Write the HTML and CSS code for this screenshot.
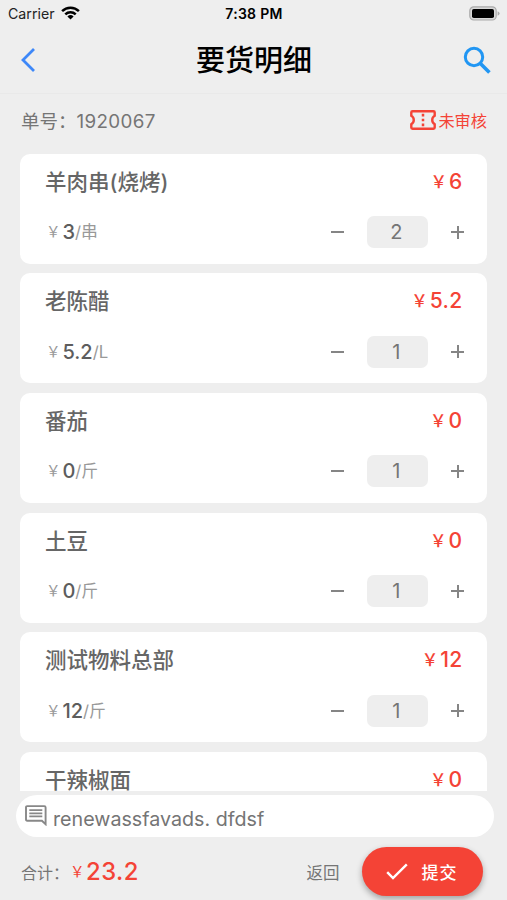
FILE: index.html
```html
<!DOCTYPE html>
<html lang="zh-CN">
<head>
<meta charset="utf-8">
<title>要货明细</title>
<link rel="stylesheet" href="styles.css">
</head>
<body>
<div class="screen">
  <header class="header">
    <div class="status">
      <div class="carrier"><span>Carrier</span>
        <svg class="wifi" width="19" height="14" viewBox="0 0 19 14"><g fill="none" stroke="#000" stroke-width="2.5"><path d="M1.1 5.1a12 12 0 0 1 16.8 0"/><path d="M4.3 8.4a7.4 7.4 0 0 1 10.4 0"/></g><path d="M6.4 10.5a4.5 4.5 0 0 1 6.2 0L9.5 13.6z"/></svg>
      </div>
      <span class="clock">7:38 PM</span>
      <svg class="battery" width="31" height="15" viewBox="0 0 31 15"><rect x=".8" y=".8" width="26.4" height="13.2" rx="4" fill="#d8d8d8" stroke="#aaa" stroke-width="1.2"/><rect x="3" y="3" width="22" height="9" rx="1.8"/><path d="M28.6 5.2q2 .8 2 2.3t-2 2.3z" fill="#aaa"/></svg>
    </div>
    <div class="nav">
      <svg class="back" width="16" height="26" viewBox="0 0 16 26"><path d="M14 2 3 13l11 11" fill="none" stroke="#3d87f8" stroke-width="2.8"/></svg>
      <h1>要货明细</h1>
      <svg class="search" width="28" height="28" viewBox="0 0 28 28" fill="none" stroke="#2196f3"><circle cx="11" cy="11" r="8.7" stroke-width="3"/><path d="m17.4 17.4 9 9" stroke-width="3.6"/></svg>
    </div>
  </header>
  <div class="order"><span class="number">单号：<span class="digits">1920067</span></span>
    <span class="state"><svg width="26" height="20" viewBox="0 0 26 20" fill="none" stroke="#f44336"><path d="M2.5 1.3h21q1.2 0 1.2 1.2v3.3a4.8 4.8 0 0 0 0 8.4v3.3q0 1.2-1.2 1.2h-21q-1.2 0-1.2-1.2v-3.3a4.8 4.8 0 0 0 0-8.4V2.5q0-1.2 1.2-1.2z" stroke-width="2.4"/><path d="M13 3.8v2.7m0 2.2v2.6m0 2.2v2.7" stroke-width="2.5"/></svg>未审核</span>
  </div>
  <main class="list">
    <article class="card"><div class="top"><h2>羊肉串(烧烤)</h2><span class="total"><i>￥</i>6</span></div><div class="bottom"><span class="price"><i>￥</i><b>3</b>/串</span><div class="stepper"><span class="minus"></span><span class="count">2</span><span class="plus"></span></div></div></article>
    <article class="card"><div class="top"><h2>老陈醋</h2><span class="total"><i>￥</i>5.2</span></div><div class="bottom"><span class="price"><i>￥</i><b>5.2</b>/L</span><div class="stepper"><span class="minus"></span><span class="count">1</span><span class="plus"></span></div></div></article>
    <article class="card"><div class="top"><h2>番茄</h2><span class="total"><i>￥</i>0</span></div><div class="bottom"><span class="price"><i>￥</i><b>0</b>/斤</span><div class="stepper"><span class="minus"></span><span class="count">1</span><span class="plus"></span></div></div></article>
    <article class="card"><div class="top"><h2>土豆</h2><span class="total"><i>￥</i>0</span></div><div class="bottom"><span class="price"><i>￥</i><b>0</b>/斤</span><div class="stepper"><span class="minus"></span><span class="count">1</span><span class="plus"></span></div></div></article>
    <article class="card"><div class="top"><h2>测试物料总部</h2><span class="total"><i>￥</i>12</span></div><div class="bottom"><span class="price"><i>￥</i><b>12</b>/斤</span><div class="stepper"><span class="minus"></span><span class="count">1</span><span class="plus"></span></div></div></article>
    <article class="card"><div class="top"><h2>干辣椒面</h2><span class="total"><i>￥</i>0</span></div></article>
  </main>
  <div class="note">
    <svg width="22" height="21" viewBox="0 0 22 21"><path d="M2.2 1.1h17.1q1.3 0 1.3 1.3v16.8l-3.7-3.5H2.2q-1.2 0-1.2-1.2V2.3q0-1.2 1.2-1.2z" fill="none" stroke="#888" stroke-width="1.9"/><path d="M4.3 5.2h13M4.3 8.3h13m-13 3.1h13" stroke="#888" stroke-width="1.8"/></svg>
    <span>renewassfavads. dfdsf</span>
  </div>
  <footer class="footer">
    <span class="label">合计：</span><span class="sum"><i>￥</i>23.2</span><span class="return">返回</span>
    <div class="submit"><svg width="22" height="17" viewBox="0 0 22 17"><path d="m1.2 9.2 5.8 5.9L20.8 1.3" fill="none" stroke="#fff" stroke-width="2.4"/></svg><span>提交</span></div>
  </footer>
</div>
</body>
</html>
```
FILE: styles.css
```css
* { box-sizing: border-box; }
body { margin: 0; background: #eee; font-family: Inter, "Noto Sans CJK SC", sans-serif; }
h1, h2 { margin: 0; }
i { font-family: "Noto Sans CJK SC", sans-serif; font-style: normal; }
svg { display: block; flex: none; }
.screen { width: 507px; height: 900px; display: flex; flex-direction: column; overflow: hidden; color: #757575; }
.header { height: 94px; border-bottom: 1px solid #e9e9e9; flex: none; }
.status { height: 27px; display: grid; grid-template-columns: 1fr auto 1fr; align-items: center; padding: 0 7px 0 8px; color: #000; }
.carrier { display: flex; align-items: center; gap: 6px; font-size: 14.2px; color: #222; }
.wifi { margin-top: -2px; }
.clock { font-size: 14px; font-weight: 600; letter-spacing: .3px; }
.battery { justify-self: end; }
.nav { height: 66px; display: grid; grid-template-columns: 1fr auto 1fr; align-items: center; padding: 0 16px 0 20px; }
.nav h1 { font-size: 29px; line-height: 40px; padding: 2px 3px 0 0; font-weight: 500; color: #000; }
.search { justify-self: end; }
.order { height: 59.5px; flex: none; padding: 0 20px 7px 21px; display: flex; justify-content: space-between; align-items: center; }
.number { font-size: 18.5px; }
.digits { font-size: 18.8px; letter-spacing: .35px; }
.state { display: flex; align-items: center; gap: 2px; font-size: 16.2px; color: #f44336; }
.list { height: 637px; flex: none; overflow: hidden; padding: 0 19.6px 0 20.4px; display: flex; flex-direction: column; gap: 9.7px; }
.card { height: 110px; flex: none; padding: 13px 20px 0 24.6px; border-radius: 10px; background: #fff; }
.top { height: 30px; display: flex; align-items: center; justify-content: space-between; padding-right: 5px; }
.top h2 { font-size: 21.5px; line-height: 30px; font-weight: 500; color: #666; }
.total { display: flex; align-items: center; font-size: 21px; line-height: 30px; font-weight: 500; letter-spacing: .3px; color: #f44336; }
.total i { font-size: 16.5px; margin: -2px 1.7px 0 0; }
.bottom { height: 32px; margin-top: 19.5px; display: flex; align-items: center; justify-content: space-between; }
.price { display: flex; align-items: center; font-size: 16.8px; line-height: 30px; color: #999; }
.price i { font-size: 14.5px; margin: -2px 1.9px 0 1px; }
.price b { font-size: 20px; font-weight: 500; color: #5d5d5d; }
.stepper { display: flex; align-items: center; gap: 23px; }
.count { width: 61px; height: 32px; border-radius: 7px; background: #eee; font-size: 20px; line-height: 32px; text-align: center; padding-right: 3px; }
.minus, .plus { width: 13px; height: 13px; background: linear-gradient(#858585, #858585) center / 13px 2px no-repeat; }
.plus { margin-right: 3px; background: linear-gradient(#858585, #858585) center / 13px 2px no-repeat, linear-gradient(#858585, #858585) center / 2px 13px no-repeat; }
.note { height: 42px; flex: none; margin: 4.5px 13px 0 16px; border-radius: 21px; background: #fff; padding: 0 8.5px; display: flex; align-items: center; gap: 6.5px; font-size: 19.7px; }
.note svg { margin-bottom: 1px; }
.note span { margin-top: 6px; }
.footer { height: 63px; flex: none; display: flex; align-items: center; padding: 6px 24.5px 0 21px; }
.label { font-size: 16px; }
.sum { display: flex; align-items: center; color: #f44336; font-size: 23.8px; font-weight: 500; letter-spacing: .5px; }
.sum i { font-size: 14.5px; font-weight: 400; letter-spacing: 0; margin: -2px 1.5px 0 1px; }
.return { margin-left: auto; font-size: 16.5px; }
.submit { width: 121px; height: 49px; margin-left: 22px; border-radius: 25px; background: #f44336; color: #fff; box-shadow: 0 3px 6px rgba(0, 0, 0, .32); display: flex; align-items: center; padding-left: 24px; gap: 14px; font-size: 17px; letter-spacing: 1px; font-weight: 500; }
```
